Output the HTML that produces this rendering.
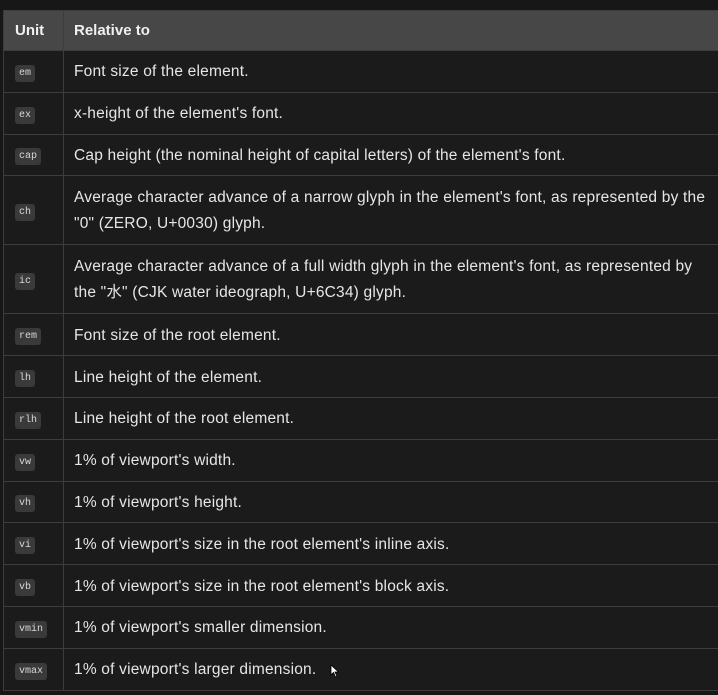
<!DOCTYPE html>
<html><head><style>
html,body{margin:0;padding:0;background:#171717;width:718px;height:695px;overflow:hidden}
.wrap{position:absolute;left:3px;top:10px;width:730px}
table{border-collapse:collapse;width:730px;font-family:"Liberation Sans","Noto Sans CJK SC",sans-serif;font-size:15.5px;letter-spacing:0.2px;color:#e6e6e6}
td,th{border:1.5px solid #3d3d3d;padding:0 10px;text-align:left;vertical-align:middle}
th{background:#474747;height:39px;font-weight:bold;color:#f0f0f0;font-size:15px;letter-spacing:0}
td{background:#1b1b1b;height:38.8px;line-height:26px;padding-top:2px}
td.u,th.u{width:48px;padding:0 0 0 11px}
td.u{padding-top:2px}
tr.two td{height:66px}
code{font-family:"Liberation Mono",monospace;font-size:10px;letter-spacing:0;background:#3a3a3a;color:#d8d8d8;padding:3px 4px;border-radius:3px}
</style></head><body>
<div class="wrap"><table>
<tr><th class="u">Unit</th><th>Relative to</th></tr>
<tr><td class="u"><code>em</code></td><td>Font size of the element.</td></tr>
<tr><td class="u"><code>ex</code></td><td>x-height of the element's font.</td></tr>
<tr><td class="u"><code>cap</code></td><td>Cap height (the nominal height of capital letters) of the element's font.</td></tr>
<tr class="two"><td class="u"><code>ch</code></td><td>Average character advance of a narrow glyph in the element's font, as represented by the<br>"0" (ZERO, U+0030) glyph.</td></tr>
<tr class="two"><td class="u"><code>ic</code></td><td>Average character advance of a full width glyph in the element's font, as represented by<br>the "水" (CJK water ideograph, U+6C34) glyph.</td></tr>
<tr><td class="u"><code>rem</code></td><td>Font size of the root element.</td></tr>
<tr><td class="u"><code>lh</code></td><td>Line height of the element.</td></tr>
<tr><td class="u"><code>rlh</code></td><td>Line height of the root element.</td></tr>
<tr><td class="u"><code>vw</code></td><td>1% of viewport's width.</td></tr>
<tr><td class="u"><code>vh</code></td><td>1% of viewport's height.</td></tr>
<tr><td class="u"><code>vi</code></td><td>1% of viewport's size in the root element's inline axis.</td></tr>
<tr><td class="u"><code>vb</code></td><td>1% of viewport's size in the root element's block axis.</td></tr>
<tr><td class="u"><code>vmin</code></td><td>1% of viewport's smaller dimension.</td></tr>
<tr><td class="u"><code>vmax</code></td><td>1% of viewport's larger dimension.<svg width="10" height="14" viewBox="0 0 10 14" style="margin-left:14px;vertical-align:-4px"><path d="M1 1 L1 11 L3.5 8.5 L5.5 13 L7 12.3 L5 8 L8.5 8 Z" fill="#fff" stroke="#000" stroke-width="0.8"/></svg></td></tr>
</table></div>
</body></html>
